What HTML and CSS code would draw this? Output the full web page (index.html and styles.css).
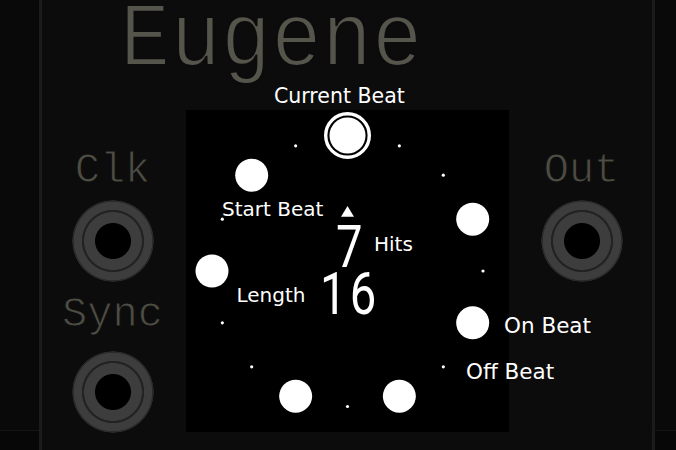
FILE: index.html
```html
<!DOCTYPE html>
<html>
<head>
<meta charset="utf-8">
<link rel="stylesheet" href="styles.css">
</head>
<body>
<div class="rack">
  <div class="neighbor"><div class="neighbor-top"></div><div class="neighbor-bottom"></div></div>
  <div class="module">
    <div class="title-bar"><h1 class="title">Eugene</h1></div>
    <div class="main">
      <div class="col col-left">
        <div class="port-label clk">Clk</div>
        <div class="jack"></div>
        <div class="port-label sync">Sync</div>
        <div class="jack"></div>
      </div>
      <div class="display">
        <svg class="ring" viewBox="0 0 323 322" width="323" height="322">
          <g fill="#fff">
            <circle cx="213.35" cy="35.81" r="1.6"/>
            <circle cx="257.31" cy="65.19" r="1.6"/>
            <circle cx="297" cy="161" r="1.6"/>
            <circle cx="257.31" cy="256.81" r="1.6"/>
            <circle cx="161.5" cy="296.5" r="1.6"/>
            <circle cx="65.69" cy="256.81" r="1.6"/>
            <circle cx="36.31" cy="212.85" r="1.6"/>
            <circle cx="36.31" cy="109.15" r="1.6"/>
            <circle cx="109.65" cy="35.81" r="1.6"/>
            <circle cx="286.69" cy="109.15" r="16.5"/>
            <circle cx="286.69" cy="212.85" r="16.5"/>
            <circle cx="213.35" cy="286.19" r="16.5"/>
            <circle cx="109.65" cy="286.19" r="16.5"/>
            <circle cx="26" cy="161" r="16.5"/>
            <circle cx="65.69" cy="65.19" r="16.5"/>
            <circle cx="161.5" cy="25.5" r="18"/>
            <polygon points="161.5,96 168,106.7 155,106.7"/>
          </g>
          <circle cx="161.5" cy="25.5" r="21.8" fill="none" stroke="#fff" stroke-width="3.4"/>
        </svg>
      </div>
      <div class="col col-right">
        <div class="port-label out">Out</div>
        <div class="jack"></div>
      </div>
    </div>
  </div>
  <div class="neighbor neighbor-right"><div class="neighbor-top"></div><div class="neighbor-bottom"></div></div>

  <div class="annotations">
    <span class="note note-current">Current Beat</span>
    <span class="note note-start">Start Beat</span>
    <span class="note note-hits">Hits</span>
    <span class="note note-length">Length</span>
    <span class="note note-on">On Beat</span>
    <span class="note note-off">Off Beat</span>
    <span class="digits digits-hits">7</span>
    <span class="digits digits-length">16</span>
  </div>
</div>
</body>
</html>
```

FILE: styles.css
```css
html, body {
  margin: 0;
  padding: 0;
  background: #080808;
}

.rack {
  position: relative;
  display: flex;
  width: 676px;
  height: 450px;
  overflow: hidden;
}

.neighbor {
  width: 39px;
  flex: none;
  display: flex;
  flex-direction: column;
}

.neighbor-right {
  width: 21px;
}

.neighbor-top {
  height: 430px;
  background: #090909;
}

.neighbor-bottom {
  flex: 1;
  background: #070707;
  border-top: 1px solid #141414;
}

.module {
  width: 616px;
  flex: none;
  box-sizing: border-box;
  border-left: 3px solid #1b1b1b;
  border-right: 3px solid #1b1b1b;
  background: #0c0c0c;
  display: flex;
  flex-direction: column;
}

.title-bar {
  height: 110px;
  flex: none;
}

.title {
  margin: 0 0 0 78px;
  font-family: "Liberation Mono", monospace;
  font-weight: normal;
  font-size: 84px;
  line-height: 0.9;
  color: #56554b;
  transform: scaleY(1.09);
  transform-origin: 0 0;
  -webkit-text-stroke: 2px #0c0c0c;
}

.main {
  display: flex;
}

.col {
  display: flex;
  flex-direction: column;
  align-items: center;
}

.col-left {
  width: 144px;
  padding-right: 3px;
  box-sizing: border-box;
}

.col-right {
  width: 143px;
  padding-left: 2px;
  box-sizing: border-box;
}

.port-label {
  font-family: "Liberation Mono", monospace;
  font-size: 42px;
  line-height: 1;
  color: #4e4d44;
  -webkit-text-stroke: 1px #0c0c0c;
}

.clk, .out {
  margin-top: 40px;
  margin-bottom: 8px;
}

.sync {
  margin-top: 12px;
  margin-bottom: 15px;
}

.jack {
  width: 82px;
  height: 82px;
  border-radius: 50%;
  background: radial-gradient(circle closest-side,
    #000 0 17.5px,
    #3d3d3d 18.5px 28.5px,
    #232323 29.2px 30.8px,
    #3d3d3d 31.5px 38.8px,
    #2a2a2a 39.5px 40.5px,
    rgba(0,0,0,0) 41px);
}

.display {
  width: 323px;
  height: 322px;
  flex: none;
  background: #000;
}

.ring {
  display: block;
}

.annotations {
  position: absolute;
  inset: 0;
  pointer-events: none;
}

.note {
  position: absolute;
  font-family: "DejaVu Sans", sans-serif;
  font-size: 20px;
  line-height: 1;
  color: #fff;
  white-space: nowrap;
}

.note-current { left: 274px; top: 86px; font-size: 20.5px; }
.note-start { left: 222px; top: 199px; }
.note-hits { left: 374px; top: 234px; }
.note-length { left: 236.5px; top: 285px; }
.note-on { left: 504px; top: 315px; font-size: 21.5px; }
.note-off { left: 466px; top: 361px; font-size: 21.5px; }

.digits {
  position: absolute;
  font-family: Roboto, sans-serif;
  font-weight: 400;
  font-size: 59px;
  line-height: 1;
  color: #fff;
  transform: scaleX(0.8);
  transform-origin: 0 0;
  white-space: nowrap;
}

.digits-hits { left: 336px; top: 217px; }
.digits-length { left: 320px; top: 263.5px; letter-spacing: 4px; }
```
